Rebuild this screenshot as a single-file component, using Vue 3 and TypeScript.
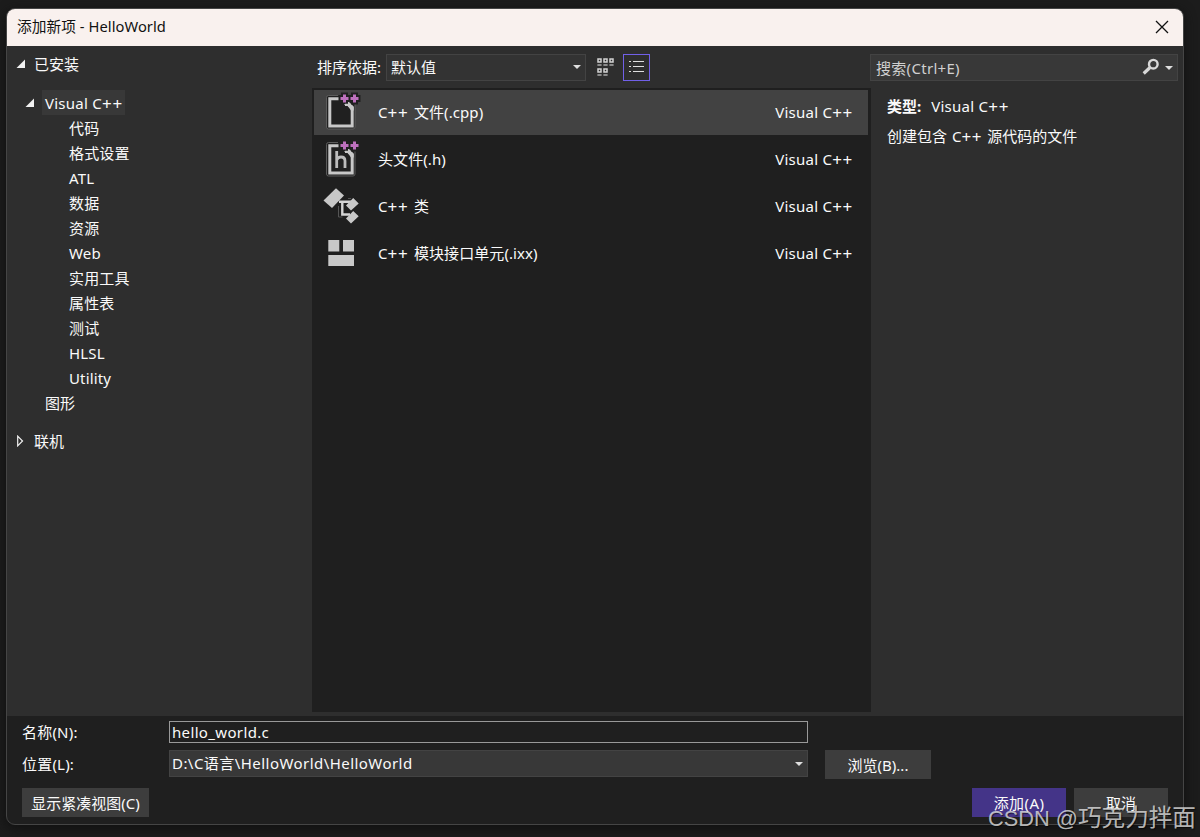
<script setup lang="ts">
import { ref } from 'vue'

interface Template {
  cpp: boolean
  name: string
  kind: 'cpp' | 'header' | 'class' | 'module'
}

const categories: string[] = ['代码', '格式设置', 'ATL', '数据', '资源', 'Web', '实用工具', '属性表', '测试', 'HLSL', 'Utility']

const templates: Template[] = [
  { cpp: true, name: ' 文件(.cpp)', kind: 'cpp' },
  { cpp: false, name: '头文件(.h)', kind: 'header' },
  { cpp: true, name: ' 类', kind: 'class' },
  { cpp: true, name: ' 模块接口单元(.ixx)', kind: 'module' },
]

const selected = ref(0)
const fileName = ref('hello_world.c')
</script>

<template>
  <div class="desktop">
    <div class="dialog">
      <header class="titlebar">
        <span class="title">添加新项 - HelloWorld</span>
        <svg class="close" width="14" height="14" viewBox="0 0 14 14"><path d="M1 1L13 13M13 1L1 13" stroke="#111" stroke-width="1.3" fill="none" /></svg>
      </header>

      <main class="body">
        <nav class="tree">
          <div class="node root">
            <svg width="10" height="10" viewBox="0 0 10 10"><path d="M9 0.5V9H0.5Z" fill="#f1f1f1" /></svg>
            <span>已安装</span>
          </div>
          <div class="node lang">
            <svg width="10" height="10" viewBox="0 0 10 10"><path d="M9 0.5V9H0.5Z" fill="#f1f1f1" /></svg>
            <span class="current vc">Visual C<span class="plus">++</span></span>
          </div>
          <div v-for="c in categories" :key="c" class="node leaf">{{ c }}</div>
          <div class="node graphics">图形</div>
          <div class="node online">
            <svg width="10" height="12" viewBox="0 0 10 12"><path d="M1.7 1.2V10.8L6.5 6Z" fill="none" stroke="#f1f1f1" stroke-width="1.2" /></svg>
            <span>联机</span>
          </div>
        </nav>

        <section class="center">
          <div class="toolbar">
            <span class="sort-label">排序依据:</span>
            <div class="combo sort">
              <span>默认值</span>
              <svg width="8" height="4" viewBox="0 0 8 4"><path d="M0 0H8L4 4Z" fill="#dedede" /></svg>
            </div>
            <svg class="grid-icon" width="18" height="20" viewBox="0 0 18 20">
              <g fill="none" stroke="#d4d4d4" stroke-width="1.5">
                <rect x="1" y="1" width="3" height="3" /><rect x="7" y="1" width="3" height="3" /><rect x="13" y="1" width="3" height="3" />
                <rect x="1" y="11" width="3" height="3" /><rect x="7" y="11" width="3" height="3" />
              </g>
              <path d="M0.4 7H4.6M6.4 7H10.6M12.4 7H16.6M0.4 17H4.6M6.4 17H10.6" stroke="#aaa" stroke-width="1.5" />
            </svg>
            <div class="list-toggle">
              <svg width="15" height="13" viewBox="0 0 15 13"><path d="M0 1.5H2M4 1.5H15M0 6.5H2M4 6.5H15M0 11.5H2M4 11.5H15" stroke="#dedede" stroke-width="1.2" /></svg>
            </div>
          </div>

          <div class="list">
            <div v-for="(t, i) in templates" :key="t.kind" class="item" :class="{ active: i === selected }" @click="selected = i">
              <svg class="icon" width="40" height="41" viewBox="0 0 40 41">
                <template v-if="t.kind === 'cpp' || t.kind === 'header'">
                  <path d="M15 3.5H5.5Q3.5 3.5 3.5 5.5V35Q3.5 37 5.5 37H30Q32 37 32 35V12" fill="#202020" stroke="#5c5c5c" />
                  <path d="M16 6.7H6.8V34H29.2V16L24 11.5H21" fill="#202020" stroke="#c8c8c8" stroke-width="3" />
                  <path d="M22 10H26L30.7 14.5V18.5H28Z" fill="#c8c8c8" />
                  <path d="M15.5 6.5H27.5M21.5 0.5V12.5M25.5 6.5H37.5M31.5 0.5V12.5" stroke="#202020" stroke-width="7" />
                  <path d="M17.5 6.5H25.5M21.5 2.5V10.5M27.5 6.5H35.5M31.5 2.5V10.5" stroke="#bd70bd" stroke-width="3" />
                  <path d="M22 12.8H25.5L28.5 15.8" fill="none" stroke="#c8c8c8" stroke-width="2.2" />
                  <path v-if="t.kind === 'header'" d="M13.7 12V29M13.7 21Q15 18 18 18Q22 18 22 22V29" fill="none" stroke="#bcbcbc" stroke-width="2.8" />
                </template>
                <template v-else-if="t.kind === 'class'">
                  <path d="M13 2.3L21 9.5L9 22L0.5 14.5Z" fill="#c8c8c8" />
                  <path d="M15.5 20V31H19.5M25 12.5H28" fill="none" stroke="#555" />
                  <path d="M16 15.7H28M19.3 16V28.5H27" fill="none" stroke="#d5d5d5" stroke-width="2.4" />
                  <path d="M30.2 12L35.7 17.5L28 24.5L23 19.5ZM30.2 25L35.7 30.3L28 37.5L23 32.5Z" fill="#c8c8c8" />
                </template>
                <path v-else d="M5.3 7H16.3V18.5H5.3ZM20 7H31V18.5H20ZM5.3 22H31V33H5.3Z" fill="#c8c8c8" />
              </svg>
              <span class="name"><template v-if="t.cpp">C<span class="plus">++</span></template>{{ t.name }}</span>
              <span class="vc">Visual C<span class="plus">++</span></span>
            </div>
          </div>
        </section>

        <aside class="details">
          <div class="combo search">
            <span class="hint">搜索(Ctrl+E)</span>
            <svg class="lens" width="18" height="18" viewBox="0 0 18 18"><circle cx="11.3" cy="6.2" r="4.3" fill="none" stroke="#d8d8d8" stroke-width="2.4" /><path d="M8 9.5L1.7 15.5" stroke="#d8d8d8" stroke-width="3.2" /></svg>
            <svg width="8" height="4" viewBox="0 0 8 4"><path d="M0 0H8L4 4Z" fill="#dedede" /></svg>
          </div>
          <p class="type"><b>类型:</b><span class="vc">Visual C<span class="plus">++</span></span></p>
          <p class="desc">创建包含 C<span class="plus">++</span> 源代码的文件</p>
        </aside>
      </main>

      <footer class="footer">
        <div class="field">
          <label>名称(N):</label>
          <input v-model="fileName" class="name-input" spellcheck="false" />
        </div>
        <div class="field location">
          <label>位置(L):</label>
          <div class="combo path">
            <span>D:\C语言\HelloWorld\HelloWorld</span>
            <svg width="8" height="4" viewBox="0 0 8 4"><path d="M0 0H8L4 4Z" fill="#dedede" /></svg>
          </div>
          <button class="browse">浏览(B)...</button>
        </div>
        <div class="actions">
          <button class="compact">显示紧凑视图(C)</button>
          <button class="add">添加(A)</button>
          <button class="cancel">取消</button>
        </div>
      </footer>
    </div>
    <div class="watermark"><span class="site">CSDN @</span><span>巧克力拌面</span></div>
  </div>
</template>

<style>
body {
  overflow: hidden;
  background: #1c1c1c;
}
</style>

<style scoped>
* {
  box-sizing: border-box;
}
.desktop {
  position: relative;
  width: 1200px;
  height: 837px;
  padding: 8px 0 0 6px;
  overflow: hidden;
  background: #1c1c1c;
  color: #fafafa;
  font: 15px/20px "Noto Sans", "Noto Sans CJK SC", sans-serif;
  white-space: nowrap;
}
.dialog {
  width: 1178px;
  height: 817px;
  border: 1px solid #454545;
  border-radius: 9px;
  overflow: hidden;
  background: #1f1f1f;
  box-shadow: 0 3px 12px #101010;
}
.titlebar {
  display: flex;
  align-items: center;
  justify-content: space-between;
  height: 37px;
  padding: 0 14px 0 10px;
  background: #f9f1ee;
  color: #111;
}
.title {
  padding-bottom: 3px;
  font-size: 14.7px;
  letter-spacing: 0.06px;
}
.close {
  margin-bottom: 1px;
}
.vc {
  letter-spacing: 0.25px;
}
.plus {
  font-size: 17px;
  line-height: 16px;
  letter-spacing: 0.7px;
  vertical-align: -1px;
}
.body {
  display: flex;
  height: 670px;
  background: #2e2e2e;
}
.tree {
  width: 305px;
  padding-top: 5px;
}
.node {
  display: flex;
  align-items: center;
  height: 25px;
}
.root {
  padding-left: 9px;
  gap: 8px;
  margin-bottom: 14px;
}
.lang {
  padding-left: 18px;
  gap: 7px;
}
.current {
  height: 25px;
  padding: 0 2px 0 3px;
  line-height: 26px;
  background: #383838;
}
.leaf {
  padding-left: 62px;
  letter-spacing: 0.15px;
}
.graphics {
  padding-left: 38px;
}
.online {
  margin-top: 13px;
  padding-left: 9px;
  gap: 8px;
}
.center {
  width: 559px;
}
.toolbar {
  display: flex;
  align-items: center;
  height: 42px;
  padding-left: 5px;
}
.sort-label {
  width: 69px;
}
.combo {
  display: flex;
  align-items: center;
  justify-content: space-between;
  height: 27px;
  border: 1px solid #434343;
  background: #383838;
}
.sort {
  width: 200px;
  padding: 0 4px;
  background: #333;
}
.grid-icon {
  margin: 2px 0 0 11px;
}
.list-toggle {
  display: flex;
  align-items: center;
  justify-content: center;
  width: 27px;
  height: 27px;
  margin-left: 8px;
  padding-bottom: 2px;
  border: 1px solid #7160e8;
}
.list {
  height: 624px;
  padding: 2px 3px 0 2px;
  background: #1f1f1f;
}
.item {
  display: flex;
  align-items: center;
  height: 45px;
  margin-bottom: 2px;
  padding: 0 15px 0 9px;
}
.item > span {
  padding-bottom: 2px;
}
.active {
  background: #424242;
}
.name {
  flex: 1;
  margin-left: 15px;
  white-space: pre;
  word-spacing: 1.5px;
  letter-spacing: 0.08px;
}
.details {
  width: 312px;
  padding-top: 8px;
}
.search {
  width: 308px;
  margin-left: -1px;
  padding: 0 4px 0 5px;
  color: #d0d0d0;
}
.hint {
  flex: 1;
  letter-spacing: 0.3px;
}
.lens {
  margin-right: 5px;
  margin-bottom: 1px;
}
.type,
.desc {
  margin: 15px 0 0 16px;
}
.type .vc {
  margin-left: 10px;
}
.desc {
  margin-top: 10px;
  word-spacing: 1px;
}
.footer {
  height: 108px;
  padding: 5px 15px 0;
}
.field {
  display: flex;
  align-items: center;
}
label {
  width: 147px;
  letter-spacing: 0.2px;
}
.name-input {
  width: 639px;
  height: 22px;
  padding: 0 2px;
  border: 1px solid #999;
  border-radius: 0;
  outline: none;
  background: #1f1f1f;
  color: #fafafa;
  font: inherit;
  letter-spacing: 0.35px;
}
.location {
  align-items: flex-start;
  margin-top: 7px;
}
.location label {
  line-height: 29px;
}
.path {
  width: 639px;
  padding: 0 4px 0 2px;
}
.path span {
  padding-bottom: 2px;
  letter-spacing: 0.45px;
}
button {
  height: 29px;
  padding: 0;
  border: 0;
  background: #3d3d3d;
  color: #fafafa;
  font: inherit;
}
.browse {
  width: 106px;
  margin-left: 17px;
}
.actions {
  display: flex;
  gap: 8px;
  margin-top: 9px;
}
.compact {
  width: 127px;
  margin-right: auto;
}
.add {
  width: 94px;
  background: #443488;
  letter-spacing: 0.4px;
}
.cancel {
  width: 94px;
}
.watermark {
  position: absolute;
  left: 988px;
  top: 802px;
  color: rgba(225, 225, 225, 0.8);
  font: 23.6px/28px "Noto Sans CJK SC", sans-serif;
  text-shadow: 1px 1px 1px rgba(0, 0, 0, 0.6);
}
.site {
  font: 21.8px/28px "Liberation Sans", sans-serif;
}
</style>
